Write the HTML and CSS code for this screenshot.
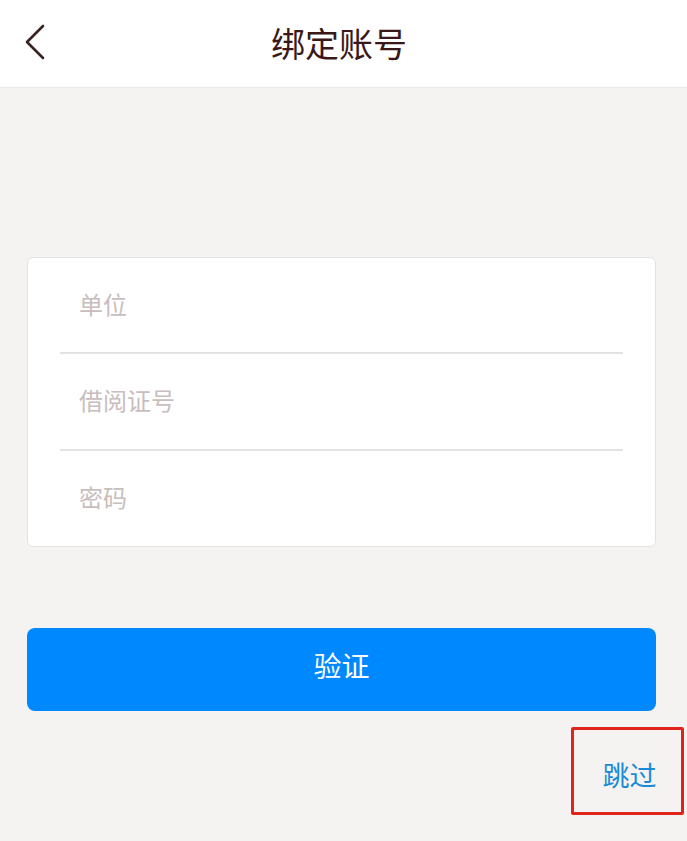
FILE: index.html
```html
<!DOCTYPE html>
<html lang="zh-CN">
<head>
<meta charset="utf-8">
<title>绑定账号</title>
<link rel="stylesheet" href="styles.css">
</head>
<body>
<header class="topbar">
  <a class="back" href="#" aria-label="返回">
    <svg width="24" height="36" viewBox="0 0 24 36"><polyline points="19,2 3,18 19,34" fill="none" stroke="#3b2323" stroke-width="2.6" stroke-linecap="round" stroke-linejoin="round"/></svg>
  </a>
  <h1 class="title">绑定账号</h1>
</header>
<main class="content">
  <form class="card">
    <div class="row"><input class="field" type="text" placeholder="单位"></div>
    <div class="divider"></div>
    <div class="row"><input class="field" type="text" placeholder="借阅证号"></div>
    <div class="divider"></div>
    <div class="row last"><input class="field" type="password" placeholder="密码"></div>
  </form>
  <button class="submit" type="button">验证</button>
  <div class="skip-row">
    <a class="skip" href="#">跳过</a>
  </div>
</main>
</body>
</html>
```

FILE: styles.css
```css
* { box-sizing: border-box; }
html, body {
  margin: 0;
  padding: 0;
  background: #f4f3f1;
  font-family: "Noto Sans CJK SC", "Noto Sans", sans-serif;
}
.topbar {
  height: 88px;
  background: #ffffff;
  border-bottom: 1px solid #ebeaea;
  display: flex;
  align-items: center;
  justify-content: center;
  position: relative;
}
.back {
  position: absolute;
  left: 24px;
  top: 24px;
  display: block;
  line-height: 0;
}
.title {
  margin: 0 0 0 -9px;
  font-size: 34px;
  font-weight: 400;
  color: #3a1818;
  line-height: 1;
  padding-bottom: 2px;
}
.content {
  padding: 169px 31px 0 27px;
}
.card {
  background: #ffffff;
  border: 1px solid #e2e2e2;
  border-radius: 6px;
  height: 290px;
  display: flex;
  flex-direction: column;
}
.row {
  height: 95px;
  display: flex;
  align-items: center;
  padding-left: 51px;
}
.row.last { height: 96px; }
.field {
  border: none;
  outline: none;
  background: transparent;
  font-family: inherit;
  font-size: 24px;
  color: #333;
  width: 100%;
  padding: 0;
  margin-top: -4px;
}
.field::placeholder { color: #c9bdbd; }
.divider {
  height: 2px;
  background: #e2e2e2;
  margin: 0 32px;
}
.submit {
  display: block;
  width: 100%;
  height: 83px;
  margin-top: 81px;
  border: none;
  border-radius: 8px;
  background: #0088ff;
  color: #ffffff;
  font-family: inherit;
  font-size: 28px;
  padding: 0 0 10px;
}
.skip-row {
  display: flex;
  justify-content: flex-end;
  margin-top: 16px;
  margin-right: -28px;
}
.skip {
  width: 113px;
  height: 88px;
  border: 3px solid #e0241b;
  border-radius: 2px;
  display: flex;
  align-items: center;
  justify-content: center;
  padding-top: 6px;
  padding-left: 4px;
  font-size: 27px;
  color: #1a8ad8;
  text-decoration: none;
}
```
